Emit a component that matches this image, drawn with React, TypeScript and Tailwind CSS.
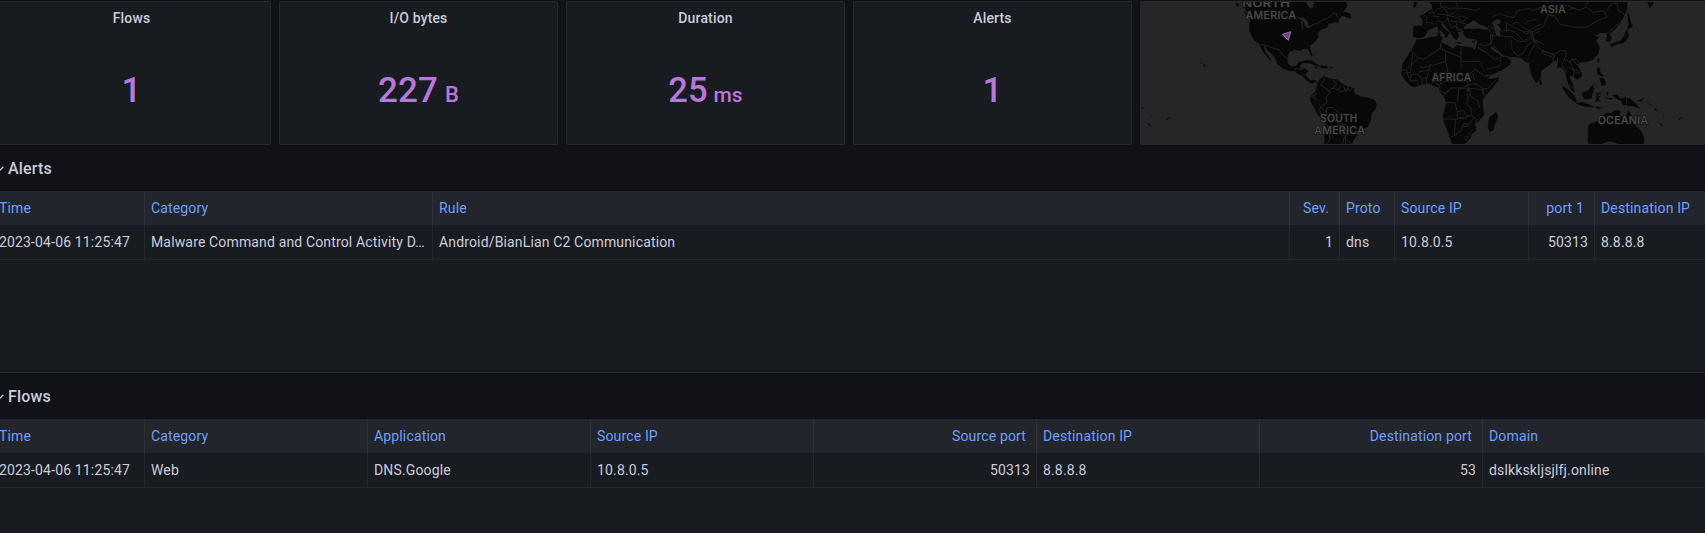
import type { ReactNode } from 'react';

type Column = { title: string; value: string; width: string; right?: boolean };

const alertColumns: Column[] = [
  { title: 'Time', value: '2023-04-06 11:25:47', width: 'w-[153px]' },
  { title: 'Category', value: 'Malware Command and Control Activity D…', width: 'w-[288px]' },
  { title: 'Rule', value: 'Android/BianLian C2 Communication', width: 'w-[857px]' },
  { title: 'Sev.', value: '1', width: 'w-[50px]', right: true },
  { title: 'Proto', value: 'dns', width: 'w-[55px]' },
  { title: 'Source IP', value: '10.8.0.5', width: 'w-[134px]' },
  { title: 'port 1', value: '50313', width: 'w-[66px]', right: true },
  { title: 'Destination IP', value: '8.8.8.8', width: 'w-[134px]' },
];

const flowColumns: Column[] = [
  { title: 'Time', value: '2023-04-06 11:25:47', width: 'w-[153px]' },
  { title: 'Category', value: 'Web', width: 'w-[223px]' },
  { title: 'Application', value: 'DNS.Google', width: 'w-[223px]' },
  { title: 'Source IP', value: '10.8.0.5', width: 'w-[223px]' },
  { title: 'Source port', value: '50313', width: 'w-[223px]', right: true },
  { title: 'Destination IP', value: '8.8.8.8', width: 'w-[223px]' },
  { title: 'Destination port', value: '53', width: 'w-[223px]', right: true },
  { title: 'Domain', value: 'dslkkskljsjlfj.online', width: 'w-[240px]' },
];

function Stat({ title, value, unit }: { title: string; value: string; unit?: string }) {
  return (
    <section className="flex h-36 w-[279px] shrink-0 flex-col rounded-[2px] border border-[#25272c] bg-[#181b1f]">
      <h2 className="h-8 text-center text-sm leading-8 font-medium tracking-[0.15px]">{title}</h2>
      <div className={`flex items-baseline justify-center leading-[42px] font-medium text-[#b877d9] ${unit === 'ms' ? 'pt-[35px] text-[34.5px] tracking-normal' : 'pt-9 text-[35px]'}`}>
        <span>{value}</span>
        {unit && <span className={unit === 'ms' ? 'pl-[6px] text-[21px]' : 'pl-[7px] text-[22px]'}>{unit}</span>}
      </div>
    </section>
  );
}

function DataTable({ columns }: { columns: Column[] }) {
  return (
    <div className="flex">
      {columns.map((c, i) => (
        <div key={c.title} className={`shrink-0 ${c.width} ${c.right ? 'text-right' : ''}`}>
          <div className={`h-[33px] whitespace-nowrap bg-[#22252b] leading-[33px] text-[#6e9fff] ${i === 0 ? 'pl-[7px]' : 'pl-1.5'} ${i < columns.length - 1 ? 'border-r border-[#2e3036]' : ''} ${c.right ? 'pr-[10px]' : 'pr-1.5'}`}>
            {c.title}
          </div>
          <div className={`h-[35px] whitespace-nowrap border-b border-b-[#25272c] pr-1.5 leading-[34px] ${i === 0 ? 'pl-[7px]' : 'pl-1.5'} ${i < columns.length - 1 ? 'border-r border-r-[#25272c]' : ''}`}>
            {c.value}
          </div>
        </div>
      ))}
    </div>
  );
}

function TablePanel({ title, height, children }: { title: string; height: string; children: ReactNode }) {
  return (
    <>
      <div className="flex h-[46px] items-center pt-px pl-[1px]">
        <svg className="h-4 w-[11px] shrink-0" viewBox="0 0 11 16" fill="none" stroke="#ccccdc" strokeWidth="1.3" strokeLinecap="round" strokeLinejoin="round">
          <path d="M2.5 6.3 6.2 10 9.9 6.3" />
        </svg>
        <h2 className="pl-1 text-base leading-6 font-medium">{title}</h2>
      </div>
      <section className={`${height} border-y border-[#25272c] bg-[#181b1f]`}>{children}</section>
    </>
  );
}

function Label({ x, y, w, children }: { x: number; y: number; w: number; children: string }) {
  return (
    <text x={x} y={y} textLength={w} lengthAdjust="spacingAndGlyphs" fontSize="29" fontWeight="500" letterSpacing="1" fontFamily="Inter, sans-serif" fill="#4a4a4a" stroke="#151515" strokeWidth="4" paintOrder="stroke">
      {children}
    </text>
  );
}

function WorldMap() {
  return (
    <svg className="h-full w-full" viewBox="18 6 1692 426" preserveAspectRatio="none">
      <rect x="0" y="0" width="1720" height="440" fill="#262626" />
      <g fill="#080808" stroke="#080808" strokeWidth="1" strokeLinejoin="round">
        <path d="M318 0 325 17 337 38 348 51 344 70 343 92 349 105 358 121 373 131 378 144 388 160 400 174 408 182 404 173 392 157 385 141 388 136 398 150 410 161 423 178 427 192 444 205 463 212 478 213 490 222 505 229 513 240 524 248 533 250 540 244 548 252 541 240 526 241 516 233 512 225 519 212 509 206 494 209 496 194 508 186 492 185 484 198 469 200 458 190 457 169 465 153 481 149 497 152 506 146 519 146 525 157 528 169 533 166 525 149 525 137 542 122 550 112 548 98 560 88 577 82 581 70 594 69 613 56 622 46 635 50 648 54 645 43 632 36 621 41 631 26 636 16 630 0 538 0 535 21 526 27 514 12 510 0Z" />
        <path d="M304 8 311 12 309 20 303 14ZM327 34 344 47 349 54 337 50ZM619 45 630 38 645 42 647 52 637 53ZM590 63 604 62 613 55 608 68ZM499 188 513 180 530 182 545 192 555 199 539 196 526 190ZM557 197 575 198 579 204 558 204ZM538 200 548 202 543 205ZM585 201 594 202 591 205ZM533 166 543 176M538 157 541 165M574 233 583 234" />
        <path d="M548 252 554 238 568 229 576 234 594 238 609 239 617 249 632 257 647 261 656 266 660 281 678 290 696 293 718 300 725 312 721 327 710 339 706 362 698 380 684 386 672 392 667 406 654 422 648 436 568 436 571 365 550 347 538 323 526 304 527 288 541 277Z" />
        <path d="m206 193 6 3-3 4ZM197 188l4 2v1ZM18 321l8 4-6-1ZM38 370l11 8-8-4ZM94 359l4-4 8-3-8 6ZM48 345l3 4Z" />
      </g>
      <g fill="none" stroke="#292929" strokeWidth="2.5" strokeLinejoin="round">
        <path d="m373 132 32 8 13 6 14 3 9 13 14 14M486 52l13 2 6 7-7 8M500 63l2 22 5 3M507 60l12 8-7 13M518 83l17-8M525 80l12-8 10-1 18-13 14-3 13-14 13-2v12l8 4M458 22l8-6M479 207l9-2 8 7 9-6M505 227l11-6M570 233l-13 23 17 9 11 12-11 14 1 17M547 277l-11 17 15 7M527 291l16-9M575 308l-18 13 14 14 5-11 16-2 14 11 9 12M576 324l-5 52M589 349l20 20 24 6M576 374l9 40-8 18M621 381l7 29-5 22M585 269l12-6 12 8 9-15M611 271l9 5 12-8 17 4M625 257l7 18M640 258l-5 16M593 240l12 11-12 15M558 321l-5 11 9 10M609 370l21 22 2 40M632 417l16 15" />
        <path d="M509 68 505 60 493 56 505 53 517 65 522 83 513 80Z" fill="#292929" />
      </g>
      <g transform="translate(855 0)">
        <g fill="#080808" stroke="#080808" strokeWidth="1" strokeLinejoin="round">
          <path d="M-20 78 4 78 9 73 8 61-1 49 12 43 23 34 37 28 36 15 29 7 31 0H622L621 26 612 48 596 76 576 96 568 102 574 116 569 125 558 123 561 107 556 98 540 99 531 104 521 108 535 111 529 124 539 141 535 160 518 179 498 186 483 186 471 193 484 214 485 229 472 239 463 232 454 226 447 231 457 250 464 277 454 270 444 248 439 232 437 217 424 201 412 204 414 190 405 180 387 195 363 213 362 232 355 244 348 249 337 230 329 205 328 188 316 186 306 175 291 171 272 171 250 166 237 153 222 145 214 136 212 147 229 158 238 163 248 171 258 171 273 180 269 194 250 208 225 219 205 231 198 219 184 192 170 168 161 154 171 134 172 119 155 116 138 113 130 101 133 90 145 86 159 87 178 86 193 90 207 89 193 77 178 72 160 60 154 65 138 74 130 83 135 90 121 94 112 96 116 107 110 120 101 113 93 100 84 87 74 75 61 67 67 80 78 91 89 98 88 102 83 103 82 110 76 113 76 104 65 95 56 83 48 79 34 87 24 89 18 104 9 112-3 114-20 110Z" />
          <path d="M-10 119 8 118 31 112 48 110 62 108 66 112 63 127 78 134 92 142 100 146 110 136 125 139 158 143 163 156 178 185 188 205 203 233 212 238 236 232 234 242 214 268 198 284 187 300 189 325 192 345 177 362 165 372 168 392 155 402 150 415 134 432 97 432 85 400 75 375 69 352 74 330 79 312 74 293 58 272 57 262 40 258 25 249 5 254-15 261-28 258-45 240-55 222-52 190-35 165-20 140Z" />
          <path d="M228 335 234 349 228 364 219 391 209 395 204 380 208 352 219 346ZM359 238l7 11-1 6-6-3ZM-18 5l9 0-4 16-7 2ZM54 83l5 1-1 11-4-2ZM53 99l7-2-1 13-6 1ZM105 127l22 2-10 2ZM154 124l12-2-6 5Z" />
          <path d="m623 36 5 15 6 22-4 11-5-15ZM624 76l14-5-2 9-13 10ZM622 91l4 14-6 15-11 9-18 3-13 8-3-9 15-6 13-3 9-14 6-16ZM570 132l8 1-1 7-6-3ZM535 174l4 2-3 13-4-6ZM531 204l8-1 2 15 9 8-2 4-16-8ZM539 233l14 4 5 17-13 3ZM523 250l-9 15 2-7ZM427 258l17 10 20 21 7 16-7 2-20-18-13-19ZM468 309l20-2 19 7 15 7-23-1-27-7ZM487 276l18-7 12-12 5 8-5 15-2 14-20 4-8-10ZM529 280l16-3-13 7-1 5 12-1-8 6 7 11-7-4-4 5-5-2 5-16ZM560 276l6 0-3 11ZM556 294l22 0-4 5ZM578 286l14-1 10 11 14-5 19 8 10 9 14 17-20-7-14-1-16-2-5-13-18-7ZM527 321l11 0-1 4-10-2ZM550 321l-19 7 17-6Z" />
          <path d="m505 377 4-4 21-8 10-13 18-12 19-1 7-8 17 2-2 13 18 10 8-24 9 13 5 23 13 13 12 14 9 20-3 22-6 10H511l-7-23Z" />
          <path d="m683 7 19 1-6 8-7 9ZM652 303l18-7-6 7ZM679 307l20 12-9-5ZM704 325l8 8-6-2ZM728 344l4 7ZM718 370l11 8-8-4ZM776 357l11-5-9 7Z" />
        </g>
        <g fill="#262626">
          <path d="m216 67 14-10 12 2-2 12-9 2 11 12-3 25-10-3-7-24Z" />
          <path d="M546 432q24-15 49 0ZM140 267l8-3 2 8-7 3Z" />
          <path d="M0 9 12 17 17 8 8 0H-9Z" />
        </g>
        <g fill="none" stroke="#292929" strokeWidth="2.3" strokeLinejoin="round">
          <path d="M-4 174-42 138M-4 174 11 178 60 146 66 132M-4 174-38 205M-48 220-28 217-22 157M0 200 10 203 56 191M31 192 27 210-5 216M60 146 77 153M63 127 60 146M123 139v63M124 184h54M77 153 123 172M76 154 77 183 56 191M77 184l7 28-20 31-24-2-6 14M27 210 23 231 5 237-5 222-28 223M6 237v22M18 234l3 23M-26 224l-4 18 22-1 4 18M-54 211l13-2 8 28M40 240l15 16 24-13 16-5 15 5 29-2 13-22 15-10 26 19 30-4M63 245l-8 25 21 11 16-17 29 0 25-10 21-2M55 270l10 23 21-21M76 308h29l7 27 19-3 8 15 16 2M113 306l3-40 30-2 7 26 19 11 7 23M145 264l-4-22M165 250l26 17-2 20M145 293l-5 21 12 8 4 27 13 9-2 18M71 356l30 2 33-7M107 357l-4 51-11 2M112 335v18l22 4 15-11M104 406l19-14 8-22 13 3 14-15M126 380l18-1 10-12M164 242l-6-22M183 267l20-1 23-26M148 265l21 2 14 1 12 18M152 281l-8 11-5-11M138 408q-10 8-3 11 9 0 9-10ZM153 394l-6 8 4 4" />
          <path d="m0 17 22 19 20 4 10-13 18-7 17 5 26-1M65 0l-4 17 19 15 2 14 21-8 11-15-8-23M53 42l26 2 5 13-13 11-19-6M82 46l28 6 15-4 19 8M113 24l31 2 24 6 14-8M91 63l26 2 22 8M84 57l8 26 16-4 4 14M107 65l6 19 13 8M115 51l11 16 16-13M113 91l16-4M40 48l19 2M30 24l15 17M15 66l24 4M0 40l20 10 1 22M-18 83l-14-6" />
          <path d="m180 81 27 4 3 12 9 9-6 25-21 7-14-6M205 78l20 9-7 16M212 104l14 4M178 130l-4 20M176 145l22 13 26 20 21-6M197 157l-18-12M200 208 238 199 243 188 240 177M211 106l3 25 16 15M218 50l20-9 24 8 20 4 8-20 35-7 17 5 18-9 24 22 17 4 12 11M239 107l37 4 19 13 22 0M244 93l24-3 18 7 24 24M258 68l19 11 19 9 21 13 20-7M258 66l1 30M277 72l14-6 22 20 18 5 17-13 18-5M307 95l25 0 1 12 29-16M316 120l15-6 8-12M273 118l4 32 15 18 18-9 14-25 20-10-7-10M324 168l11-18 14-29 21 12M332 113l12 5 12 24 16 13 33 7 14-9 15-2 6 11-8 19-6 14 15 23M367 151l37 15-2 8-36-15ZM404 164l-5 14 5 19 9-8-1-18M432 178l18 8 11 23 15 3M447 190l8-11 14-1 17 18-13 4M443 202l20 9-5 26M459 176l7 14 12 8 6 17-21 6" />
          <path d="M384 47h22l14 26 45 9 37-1 33-21 25-8-8-20-32 5-20-15-23 8-34-12-27-7M384 47l-14 33-34 16 8 32M558 36l15-24 18-1 4 20 20 13-3 19-24 14-23 22-26 5M551 114l10-4M483 278l16-3 8-10M620 292v29M447 254l12 9M512 0l-18 17M350 58l-24 5-13 10M465 23l-17 5" />
        </g>
      </g>
      <Label x={322} y={21} w={144}>NORTH</Label>
      <Label x={332} y={57} w={152}>AMERICA</Label>
      <Label x={556} y={367} w={112}>SOUTH</Label>
      <Label x={538} y={403} w={152}>AMERICA</Label>
      <Label x={890} y={244} w={119}>AFRICA</Label>
      <Label x={1216} y={39} w={77}>ASIA</Label>
      <Label x={1388} y={373} w={152}>OCEANIA</Label>
      <path d="m442 103 25-8-7 26Z" fill="#67447a" stroke="#a36abf" strokeWidth="3" strokeLinejoin="round" />
    </svg>
  );
}

export default function App() {
  return (
    <main className="h-[533px] w-full overflow-hidden bg-[#111217] font-['Roboto',sans-serif] text-sm tracking-[0.15px] text-[#ccccdc]">
      <div className="-ml-2 w-[1728px]">
        <div className="flex gap-2 pt-px">
          <Stat title="Flows" value="1" />
          <Stat title="I/O bytes" value="227" unit="B" />
          <Stat title="Duration" value="25" unit="ms" />
          <Stat title="Alerts" value="1" />
          <section className="h-36 w-[566px] shrink-0 overflow-hidden rounded-[2px] border border-[#25272c]">
            <WorldMap />
          </section>
        </div>
        <TablePanel title="Alerts" height="h-[182px]">
          <DataTable columns={alertColumns} />
        </TablePanel>
        <TablePanel title="Flows" height="h-[182px]">
          <DataTable columns={flowColumns} />
        </TablePanel>
      </div>
    </main>
  );
}
